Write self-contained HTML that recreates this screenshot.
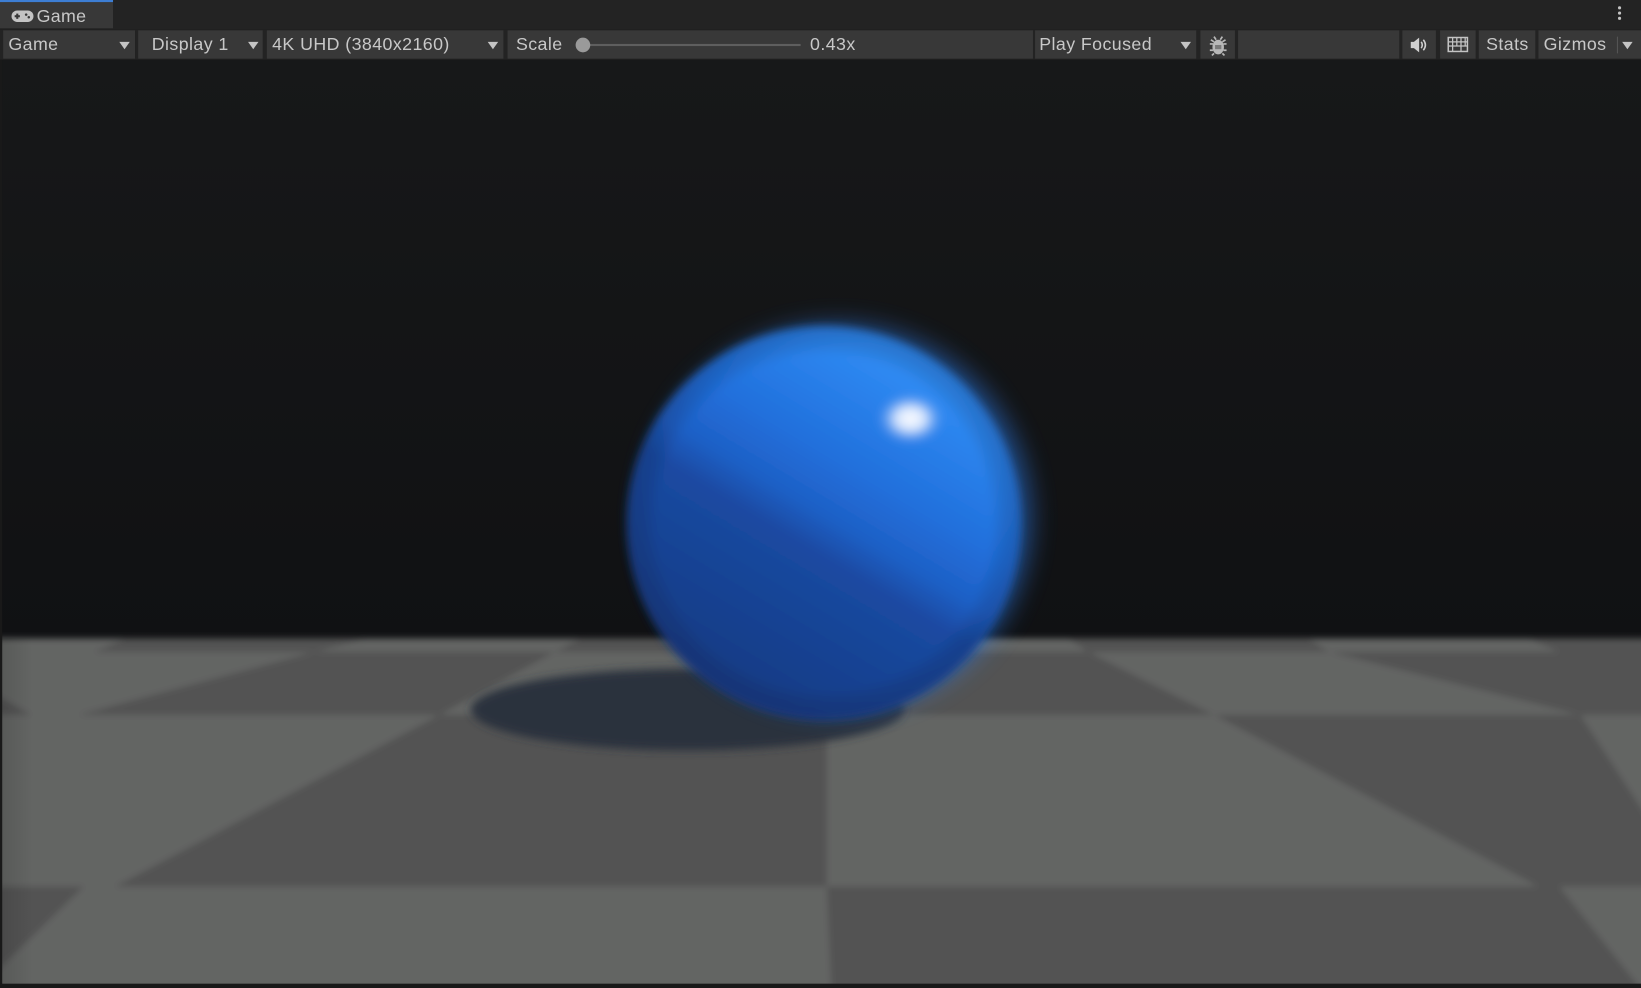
<!DOCTYPE html>
<html><head><meta charset="utf-8"><style>
html,body{margin:0;padding:0;width:1641px;height:988px;overflow:hidden;background:#191919}
#w{position:absolute;left:0;top:0;width:1568px;height:944px;transform:scale(1.04656,1.04661);transform-origin:0 0;font-family:"Liberation Sans","DejaVu Sans",sans-serif;color:#c8c8c8;font-size:17px}
.tabbar{position:absolute;left:0;top:0;width:1568px;height:28px;background:#232323}
.tab{position:absolute;left:0;top:0;width:108px;height:27px;background:#383838;border-top:2px solid #3d7ed4;box-sizing:border-box}
.tab span{position:absolute;left:35px;top:4px;letter-spacing:0.3px}
.tb{position:absolute;left:0;top:28px;width:1568px;height:29px;background:#232323}
.b{position:absolute;top:1px;height:27px;background:#383838}
.b span{position:absolute;top:4px;white-space:nowrap;letter-spacing:0.4px}
.arr{position:absolute;top:11px;width:0;height:0;border-left:5px solid transparent;border-right:5px solid transparent;border-top:7px solid #c4c4c4}
.vp{position:absolute;left:2px;top:57px;width:1566px;height:883px;overflow:hidden}
</style></head><body><div id="w">
<div class="tabbar">
 <div class="tab"><svg style="position:absolute;left:11px;top:7px" width="21" height="13" viewBox="0 0 21 13"><rect x="0" y="1" width="21" height="11" rx="5.5" fill="#c4c4c4"/><rect x="3" y="5.5" width="5" height="2" fill="#383838"/><rect x="4.5" y="4" width="2" height="5" fill="#383838"/><circle cx="14" cy="5" r="1.2" fill="#383838"/><circle cx="16.5" cy="7.5" r="1.2" fill="#383838"/></svg><span>Game</span></div>
 <div style="position:absolute;left:1546px;top:6px;width:3px"><div style="width:3px;height:3px;background:#c4c4c4;border-radius:2px;margin-bottom:2px"></div><div style="width:3px;height:3px;background:#c4c4c4;border-radius:2px;margin-bottom:2px"></div><div style="width:3px;height:3px;background:#c4c4c4;border-radius:2px"></div></div>
</div>
<div class="tb">
 <div class="b" style="left:3px;width:126px"><span style="left:5px">Game</span><div class="arr" style="left:111px"></div></div>
 <div class="b" style="left:132px;width:119px"><span style="left:13px">Display 1</span><div class="arr" style="left:105px"></div></div>
 <div class="b" style="left:255px;width:226px"><span style="left:5px">4K UHD (3840x2160)</span><div class="arr" style="left:211px"></div></div>
 <div class="b" style="left:485px;width:502px"><span style="left:8px">Scale</span><div style="position:absolute;left:72px;top:13px;width:208px;height:2px;background:#5e5e5e"></div><div style="position:absolute;left:65px;top:7px;width:14px;height:14px;border-radius:7px;background:#9a9a9a"></div><span style="left:289px">0.43x</span></div>
 <div class="b" style="left:989px;width:154px"><span style="left:4px">Play Focused</span><div class="arr" style="left:139px"></div></div>
 <div class="b" style="left:1147px;width:33px"><svg style="position:absolute;left:7px;top:3px" width="20" height="22" viewBox="0 0 20 22"><g stroke="#b8b8b8" stroke-width="1.6" fill="none"><path d="M6 3l2 3M14 3l-2 3M2 10h3M15 10h3M2 16h3M15 16h3M3 6l3 2M17 6l-3 2M4 21l2-2M16 21l-2-2"/></g><ellipse cx="10" cy="13" rx="5.5" ry="7" fill="#b8b8b8"/><rect x="7" y="11" width="6" height="4" fill="#7a7a7a"/></svg></div>
 <div class="b" style="left:1183px;width:154px"></div>
 <div class="b" style="left:1340px;width:32px"><svg style="position:absolute;left:7px;top:7px" width="18" height="14" viewBox="0 0 18 14"><path d="M1 4h3l5-4v14l-5-4H1z" fill="#d0d0d0"/><path d="M11 4q2 3 0 6M13 2q4 5 0 10" stroke="#d0d0d0" stroke-width="1.5" fill="none"/></svg></div>
 <div class="b" style="left:1376px;width:34px"><svg style="position:absolute;left:7px;top:6px" width="20" height="15" viewBox="0 0 20 15"><rect x="0.8" y="0.8" width="18.4" height="13.4" fill="none" stroke="#c4c4c4" stroke-width="1.5"/><path d="M1 5h18M1 9h18M5 1v13M9 1v8M13 1v13M17 1v8" stroke="#c4c4c4" stroke-width="1.2"/></svg></div>
 <div class="b" style="left:1413px;width:54px"><span style="left:7px">Stats</span></div>
 <div class="b" style="left:1470px;width:98px"><span style="left:5px">Gizmos</span><div style="position:absolute;left:75px;top:6px;width:1px;height:16px;background:#555"></div><div class="arr" style="left:80px"></div></div>
</div>
<div class="vp">
<svg width="1566" height="883" viewBox="2 57 1566 883">
<defs>
 <linearGradient id="bg" x1="0" y1="0" x2="0" y2="1"><stop offset="0" stop-color="#171819"/><stop offset="1" stop-color="#101113"/></linearGradient>
 <filter id="fb" x="-5%" y="-5%" width="110%" height="110%"><feGaussianBlur stdDeviation="3"/></filter>
 <filter id="sb" x="-20%" y="-20%" width="140%" height="140%"><feGaussianBlur stdDeviation="4"/></filter>
 <filter id="gl" x="-30%" y="-30%" width="160%" height="160%"><feGaussianBlur stdDeviation="12"/></filter>
 <linearGradient id="sp" x1="0.78" y1="0.1" x2="0.3" y2="0.9"><stop offset="0" stop-color="#3290f8"/><stop offset="0.35" stop-color="#2170dc"/><stop offset="0.5" stop-color="#1f60c6"/><stop offset="0.6" stop-color="#1a4aa2"/><stop offset="1" stop-color="#173c86"/></linearGradient>
 <radialGradient id="hl"><stop offset="0" stop-color="#ffffff"/><stop offset="0.4" stop-color="#e6eeff" stop-opacity="0.9"/><stop offset="1" stop-color="#3a88f0" stop-opacity="0"/></radialGradient>
 <radialGradient id="edge" cx="0.5" cy="0.5" r="0.5"><stop offset="0.85" stop-color="#000" stop-opacity="0"/><stop offset="1" stop-color="#0d2a60" stop-opacity="0.3"/></radialGradient>
 <linearGradient id="vig" x1="0" y1="0" x2="1" y2="0"><stop offset="0" stop-color="#000" stop-opacity="0.12"/><stop offset="0.02" stop-color="#000" stop-opacity="0"/><stop offset="1" stop-color="#000" stop-opacity="0"/></linearGradient>
</defs>
<rect x="0" y="57" width="1570" height="560" fill="url(#bg)"/>
<g filter="url(#fb)">
 <rect x="-10" y="610" width="1590" height="340" fill="#646564"/>
 <polygon points="120,610 351,610 300,623 90,623" fill="#525353"/>
 <polygon points="555,610 700,610 700,623 530,623" fill="#525353"/>
 <polygon points="1020,610 1250,610 1270,623 1040,623" fill="#525353"/>
 <polygon points="1460,610 1580,610 1580,623 1490,623" fill="#525353"/>
 <polygon points="300,623 530,623 420,683 75,683" fill="#525353"/>
 <polygon points="700,623 1040,623 1160,683 700,683" fill="#525353"/>
 <polygon points="1270,623 1580,623 1580,683 1510,683" fill="#525353"/>
 <polygon points="-10,660 30,683 -10,683" fill="#525353"/>
 <polygon points="420,683 790,683 790,847 110,847" fill="#525353"/>
 <polygon points="1160,683 1580,683 1580,847 1470,847" fill="#525353"/>
 <polygon points="1510,683 1580,683 1580,790" fill="#646564"/>
 <polygon points="-10,847 80,847 -10,935" fill="#525353"/>
 <polygon points="790,847 1490,847 1580,960 795,960" fill="#525353"/>
</g>
<rect x="0" y="610" width="1570" height="340" fill="url(#vig)"/>
<ellipse cx="657" cy="678" rx="207" ry="39" fill="#2a323e" filter="url(#sb)"/>
<circle cx="800" cy="495" r="185" fill="#2f7ff0" opacity="0.55" filter="url(#gl)"/>
<g filter="url(#sb)">
 <circle cx="787" cy="500" r="188" fill="url(#sp)"/>
 <circle cx="787" cy="500" r="188" fill="url(#edge)"/>
 <ellipse cx="870" cy="400" rx="34" ry="26" fill="url(#hl)"/>
</g>
</svg>
</div>
<div style="position:absolute;left:0;top:57px;width:2px;height:887px;background:#191919"></div>
<div style="position:absolute;left:0;top:940px;width:1568px;height:4px;background:#191919"></div>
</div></body></html>
